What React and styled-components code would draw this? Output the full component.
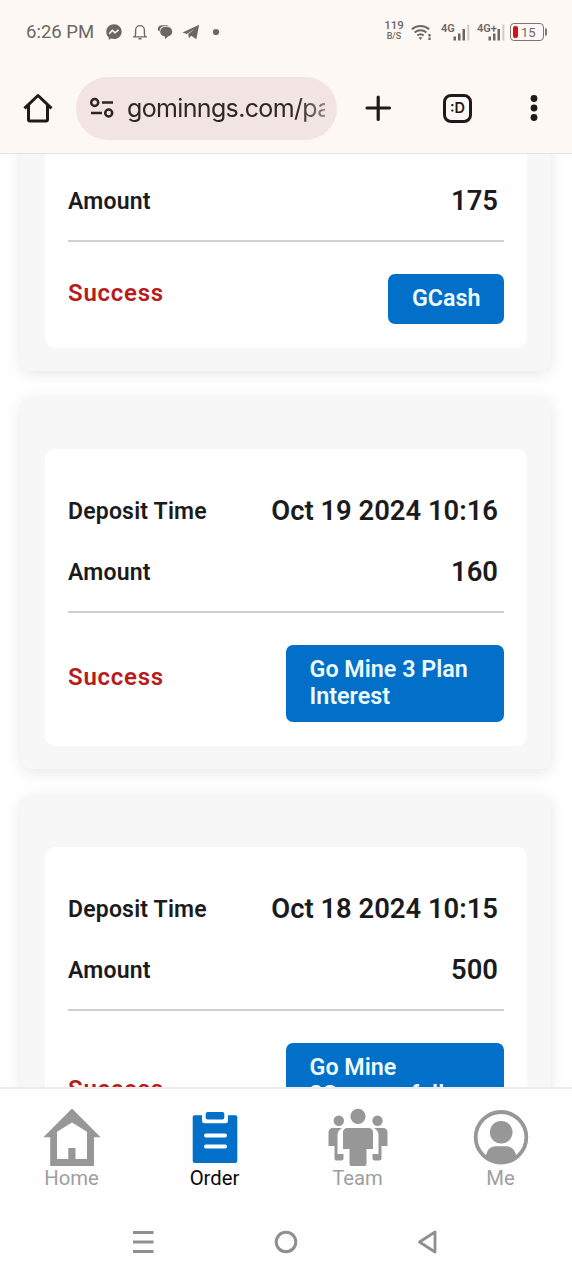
import styled, { createGlobalStyle } from "styled-components";

const GlobalStyle = createGlobalStyle`
    * {
        box-sizing: border-box;
    }
    body {
        margin: 0;
        background: #fefefe;
        font-family: Roboto, "Liberation Sans", sans-serif;
    }
`;

const Screen = styled.div`
    width: 572px;
    height: 1280px;
    display: flex;
    flex-direction: column;
    overflow: hidden;
`;

/* browser header */

const Header = styled.header`
    flex: none;
    height: 154px;
    background: #fef8f5;
    border-bottom: 1.5px solid #ebe1de;
`;

const StatusBar = styled.div`
    height: 64px;
    padding: 0 25px 0 26px;
    display: flex;
    align-items: center;
    justify-content: space-between;
    color: #6c6664;
`;

const StatusGroup = styled.div`
    display: flex;
    align-items: center;
    gap: ${(props) => props.$gap}px;
`;

const Clock = styled.span`
    width: 71px;
    font-size: 18.5px;
    white-space: nowrap;
`;

const NetSpeed = styled.div`
    width: 20px;
    display: flex;
    flex-direction: column;
    align-items: center;
    font-size: 11.5px;
    font-weight: 500;
    line-height: 13px;
    margin-top: -5px;
`;

const Unit = styled.span`
    height: 8px;
    font-size: 9px;
    line-height: 9px;
`;

const Signal = styled.div`
    width: ${(props) => props.$width}px;
    height: 20px;
    margin: 0 ${(props) => props.$right || 0}px 0 ${(props) => props.$left || 0}px;
    display: flex;
    align-items: flex-start;
    font-size: 11px;
    font-weight: 600;
    line-height: 13px;

    svg {
        flex: none;
        margin: 2px 0 0 ${(props) => props.$shift}px;
    }
`;

const Battery = styled.div`
    width: 34px;
    height: 18px;
    padding: 2px;
    display: flex;
    align-items: center;
    gap: 3px;
    border: 1.5px solid #7d7674;
    border-radius: 4px;
    font-size: 13px;
`;

const BatteryLevel = styled.span`
    width: 5px;
    height: 12px;
    border-radius: 2px;
    background: #d81118;
`;

const BatteryTip = styled.span`
    width: 2px;
    height: 8px;
    border-radius: 0 2px 2px 0;
    background: #7d7674;
`;

const Toolbar = styled.div`
    height: 88px;
    padding: 0 21px 0 22px;
    display: flex;
    align-items: center;
    color: #1d1a19;

    svg {
        flex: none;
    }
`;

const UrlBar = styled.div`
    flex: none;
    width: 261px;
    height: 63px;
    margin: 0 25px 0 22px;
    padding: 0 12px 0 13px;
    display: flex;
    align-items: center;
    gap: 12px;
    border-radius: 32px;
    background: #f2e4e2;
`;

const Url = styled.span`
    flex: 1;
    overflow: hidden;
    white-space: nowrap;
    font-family: Inter, Roboto, sans-serif;
    font-size: 25px;
    letter-spacing: -0.65px;
    line-height: 36px;
    color: #2f2725;
    mask-image: linear-gradient(to right, #000 86%, rgba(0, 0, 0, 0.5));
`;

const Tabs = styled.div`
    flex: none;
    width: 29px;
    height: 29px;
    margin: 0 45px 0 49px;
    display: flex;
    align-items: center;
    justify-content: center;
    border: 3px solid #1d1a19;
    border-radius: 8px;
    font-family: Inter, Roboto, sans-serif;
    font-size: 14.5px;
    font-weight: 600;
    line-height: 20px;
`;

/* orders */

const Content = styled.main`
    flex: 1;
    min-height: 0;
    overflow: hidden;
`;

const OrderList = styled.div`
    margin-top: -67px;
    padding: 0 21px;
    display: flex;
    flex-direction: column;
    gap: 26px;
`;

const OrderCard = styled.section`
    padding: 52px 24px 23px;
    background: #f7f7f7;
    border-radius: 10px;
    box-shadow: 0 3px 14px rgba(0, 0, 0, 0.09);
`;

const OrderBody = styled.div`
    padding: 31px 23px 24px;
    background: #fff;
    border-radius: 10px;
`;

const Row = styled.div`
    height: 61px;
    padding-right: 6px;
    display: flex;
    justify-content: space-between;
    line-height: 63px;
`;

const Label = styled.span`
    font-size: 23px;
    font-weight: 600;
    letter-spacing: 0.2px;
    color: #1b1b1d;
`;

const Value = styled.span`
    font-size: 27.4px;
    font-weight: 600;
    color: #1b1b1d;
`;

const Footer = styled.div`
    margin-top: 9px;
    padding-top: 32px;
    display: flex;
    align-items: center;
    justify-content: space-between;
    border-top: 2px solid #d0d0d0;
`;

const Status = styled.span`
    padding-bottom: 13px;
    font-size: 24px;
    font-weight: 600;
    letter-spacing: 0.75px;
    color: #b71c1c;
`;

const PlanButton = styled.button`
    max-width: 50%;
    padding: 11px 23.5px 12px;
    border: 0;
    border-radius: 7px;
    background: #0270c8;
    color: #edfaff;
    font-family: inherit;
    font-size: 23.3px;
    font-weight: 600;
    line-height: 27px;
    text-align: left;
`;

/* bottom bars */

const TabBar = styled.nav`
    flex: none;
    height: 117px;
    padding-top: 18px;
    display: grid;
    grid-template-columns: repeat(4, 1fr);
    border-top: 2px solid #ececec;
    background: #fefefe;
`;

const TabItem = styled.div`
    display: flex;
    flex-direction: column;
    align-items: center;
    font-size: 20.3px;
    line-height: 22px;
    color: ${(props) => (props.$active ? "#0a0a0a" : "#9f9f9f")};
`;

const SystemBar = styled.div`
    flex: none;
    height: 76px;
    padding: 0 71px;
    display: grid;
    grid-template-columns: repeat(3, 1fr);
    align-items: center;
    justify-items: center;
    background: #fefefe;
`;

const orders = [
    { id: 1, amount: 175, plan: "GCash" },
    { id: 2, time: "Oct 19 2024 10:16", amount: 160, plan: "Go Mine 3 Plan Interest" },
    { id: 3, time: "Oct 18 2024 10:15", amount: 500, plan: "Go Mine 3Successfully Interest" },
];

const MessengerIcon = () => (
    <svg width="16" height="16" viewBox="0 0 16 16">
        <path d="M8 .3C3.600.3.3 3.500.3 7.700c0 2.300.9 4.200 2.400 5.500v2.500l2.500-1.200c.9.300 1.800.5 2.800.5 4.400 0 7.700-3.200 7.700-7.300S12.400.3 8 .3z" fill="currentColor" />
        <path d="M3.300 9.800 6.300 6.300 9 8.800l3.600-2.900" fill="none" stroke="#fef8f5" strokeWidth="1.600" />
    </svg>
);

const BellIcon = () => (
    <svg width="16" height="16" viewBox="0 0 16 16" fill="none" stroke="currentColor" strokeWidth="1.400">
        <path d="M1 12.900h14M3 12.700Q3.600 11.500 3.600 9V6a4.400 4.400 0 0 1 8.800 0v3q0 2.500.6 3.700M6.500 14.800h3" />
    </svg>
);

const ChatIcon = () => (
    <svg width="16" height="16" viewBox="0 0 16 16" fill="currentColor">
        <path d="M.8 5C.8 2.800 2.700 1.300 5 1.300h4c1.300 0 2.300.3 3 1H7C4.300 2.300 2.600 4.100 2.500 7.500 1.400 7.100.8 6.200.8 5z" />
        <path d="M3.200 7.800c0-2.800 2-4.700 4.900-4.700h2.200c2.900 0 4.900 1.900 4.900 4.700 0 2.500-1.600 4.200-4.200 4.700L8 15.200v-2.700c-2.900 0-4.800-2-4.800-4.700z" />
    </svg>
);

const TelegramIcon = () => (
    <svg width="18" height="16" viewBox="0 0 18 16" fill="currentColor">
        <path d="M.5 8.500 17.200.8 14.300 15.300 9.300 11.800l-2.400 2.500-.7-4.200L13.200 4.800 4.800 9.900z" />
    </svg>
);

const WifiIcon = () => (
    <svg width="21" height="17" viewBox="0 0 21 17" fill="none" stroke="currentColor" strokeWidth="1.900">
        <path d="M.8 5.300a13 13 0 0 1 17.400 0M3.600 8.500a9 9 0 0 1 11.800 0M6.300 11.500a5 5 0 0 1 6.400 0" />
        <path d="M7.500 13.300h4L9.500 16z" fill="currentColor" stroke="none" />
        <path d="M18.500 10v2.500M18.500 13.500V16" strokeWidth="2.300" />
    </svg>
);

const Bars = () => (
    <svg width="17" height="17" viewBox="0 0 17 17" fill="currentColor">
        <path d="M.5 12.500h2.500v4H.5zM5 9.500h2.500v7H5zM9.500 5h2.500v11.500H9.500z" />
        <path d="M14.300.5h2v16h-2z" opacity=".3" />
    </svg>
);

const HomeButton = () => (
    <svg width="32" height="32" viewBox="0 0 32 32" fill="none" stroke="currentColor" strokeWidth="3" strokeLinejoin="round">
        <path d="M2.500 16.300 16 3.500l13.500 12.800M6.500 13v14.500q0 1.500 1.500 1.500h16q1.500 0 1.500-1.500V13" />
    </svg>
);

const TuneIcon = () => (
    <svg width="26" height="22" viewBox="0 0 26 22" fill="none" stroke="#2c2422" strokeWidth="2.500">
        <circle cx="5.700" cy="5.500" r="3.500" />
        <circle cx="19.700" cy="16" r="3.500" />
        <path d="M13 5.500h11M2 16h11" />
    </svg>
);

const PlusIcon = () => (
    <svg width="32" height="32" viewBox="0 0 32 32" stroke="currentColor" strokeWidth="3.200" strokeLinecap="round">
        <path d="M5 16h22.500M16.200 5v22.500" />
    </svg>
);

const MenuDots = () => (
    <svg width="34" height="30" viewBox="0 0 34 30" fill="currentColor">
        <circle cx="17" cy="5.500" r="3.400" />
        <circle cx="17" cy="15" r="3.400" />
        <circle cx="17" cy="24.500" r="3.400" />
    </svg>
);

const HomeIcon = () => (
    <svg width="60" height="60" viewBox="0 0 60 60" fill="#979797" fillRule="evenodd">
        <path d="M30 1.500 58.600 30.300H52V59H8.200V30.300H1.400zM30 15.500 15 24.800V52h11.300V41h7.200v11H45V24.800z" />
    </svg>
);

const OrderIcon = () => (
    <svg width="60" height="60" viewBox="0 0 60 60" fill="#0270c8">
        <path d="M9.500 8.300H17V14q0 2.300 2.300 2.300h21.400q2.300 0 2.300-2.300V8.300h7.500q1.800 0 1.800 1.800v44q0 1.800-1.800 1.800h-41q-1.800 0-1.800-1.800v-44q0-1.800 1.800-1.800z" />
        <rect x="20.700" y="5" width="18.600" height="7.500" rx="2" />
        <path d="M21 28.500h19M21 39.500h19" stroke="#fff" strokeWidth="4" strokeLinecap="round" />
    </svg>
);

const TeamIcon = () => (
    <svg width="60" height="60" viewBox="0 0 60 60" fill="#979797">
        <circle cx="30" cy="9.300" r="7.600" />
        <circle cx="10.800" cy="13.700" r="5.200" />
        <circle cx="49.500" cy="13.700" r="5.200" />
        <path d="M19.500 21h21q4.500 0 4.500 4.500V42h-6.500v15q0 2-2 2h-13q-2 0-2-2V42H15V25.500q0-4.500 4.500-4.500z" />
        <path d="M5 21h9Q9.500 23.500 9.500 28v19h6v4.500q0 2-2 2h-5q-2 0-2-2V39H.5V25.500Q.5 21 5 21z" />
        <path d="M55 21h-9q4.500 2.500 4.500 7v19h-6v4.500q0 2 2 2h5q2 0 2-2V39h6V25.500Q59.500 21 55 21z" />
    </svg>
);

const MeIcon = () => (
    <svg width="60" height="60" viewBox="0 0 60 60" fill="#979797">
        <circle cx="30" cy="30.300" r="25.300" fill="none" stroke="#979797" strokeWidth="3.800" />
        <circle cx="30.200" cy="25.200" r="11.300" />
        <path d="M14.500 50q2-10.700 10-10.700h11q8 0 10 10.700-6.500 6.500-15.500 6.500T14.500 50z" />
    </svg>
);

const tabs = [
    { name: "Home", Icon: HomeIcon },
    { name: "Order", Icon: OrderIcon, active: true },
    { name: "Team", Icon: TeamIcon },
    { name: "Me", Icon: MeIcon },
];

const Order = ({ item }) => {
    return (
        <OrderCard>
            <OrderBody>
                {item.time && (
                    <Row>
                        <Label>Deposit Time</Label>
                        <Value>{item.time}</Value>
                    </Row>
                )}
                <Row>
                    <Label>Amount</Label>
                    <Value>{item.amount}</Value>
                </Row>
                <Footer>
                    <Status>Success</Status>
                    <PlanButton>{item.plan}</PlanButton>
                </Footer>
            </OrderBody>
        </OrderCard>
    );
};

const App = () => {
    return (
        <Screen>
            <GlobalStyle />
            <Header>
                <StatusBar>
                    <StatusGroup $gap={9.3}>
                        <Clock>6:26 PM</Clock>
                        <MessengerIcon />
                        <BellIcon />
                        <ChatIcon />
                        <TelegramIcon />
                        <svg width="16" height="16" viewBox="0 0 16 16">
                            <circle cx="7" cy="8" r="3.100" fill="currentColor" />
                        </svg>
                    </StatusGroup>
                    <StatusGroup $gap={7}>
                        <NetSpeed>
                            119
                            <Unit>B/S</Unit>
                        </NetSpeed>
                        <WifiIcon />
                        <Signal $width={29} $shift={-2} $left={2}>
                            4G
                            <Bars />
                        </Signal>
                        <Signal $width={28} $shift={-9} $right={-2}>
                            4G+
                            <Bars />
                        </Signal>
                        <StatusGroup $gap={1}>
                            <Battery>
                                <BatteryLevel />
                                15
                            </Battery>
                            <BatteryTip />
                        </StatusGroup>
                    </StatusGroup>
                </StatusBar>
                <Toolbar>
                    <HomeButton />
                    <UrlBar>
                        <TuneIcon />
                        <Url>gominngs.com/pa</Url>
                    </UrlBar>
                    <PlusIcon />
                    <Tabs>:D</Tabs>
                    <MenuDots />
                </Toolbar>
            </Header>
            <Content>
                <OrderList>
                    {orders.map((item) => (
                        <Order item={item} key={item.id} />
                    ))}
                </OrderList>
            </Content>
            <TabBar>
                {tabs.map(({ name, Icon, active }) => (
                    <TabItem $active={active} key={name}>
                        <Icon />
                        {name}
                    </TabItem>
                ))}
            </TabBar>
            <SystemBar>
                <svg width="24" height="24" viewBox="0 0 24 24" stroke="#8f8f8f" strokeWidth="2.800">
                    <path d="M2 2.500h20.500M2 12h20.500M2 21.500h20.500" />
                </svg>
                <svg width="24" height="24" viewBox="0 0 24 24" fill="none" stroke="#8f8f8f" strokeWidth="3">
                    <circle cx="12" cy="12" r="9.800" />
                </svg>
                <svg width="24" height="24" viewBox="0 0 24 24" fill="none" stroke="#8f8f8f" strokeWidth="2.800" strokeLinejoin="round">
                    <path d="M2.500 12 18 2v20z" />
                </svg>
            </SystemBar>
        </Screen>
    );
};

export default App;
